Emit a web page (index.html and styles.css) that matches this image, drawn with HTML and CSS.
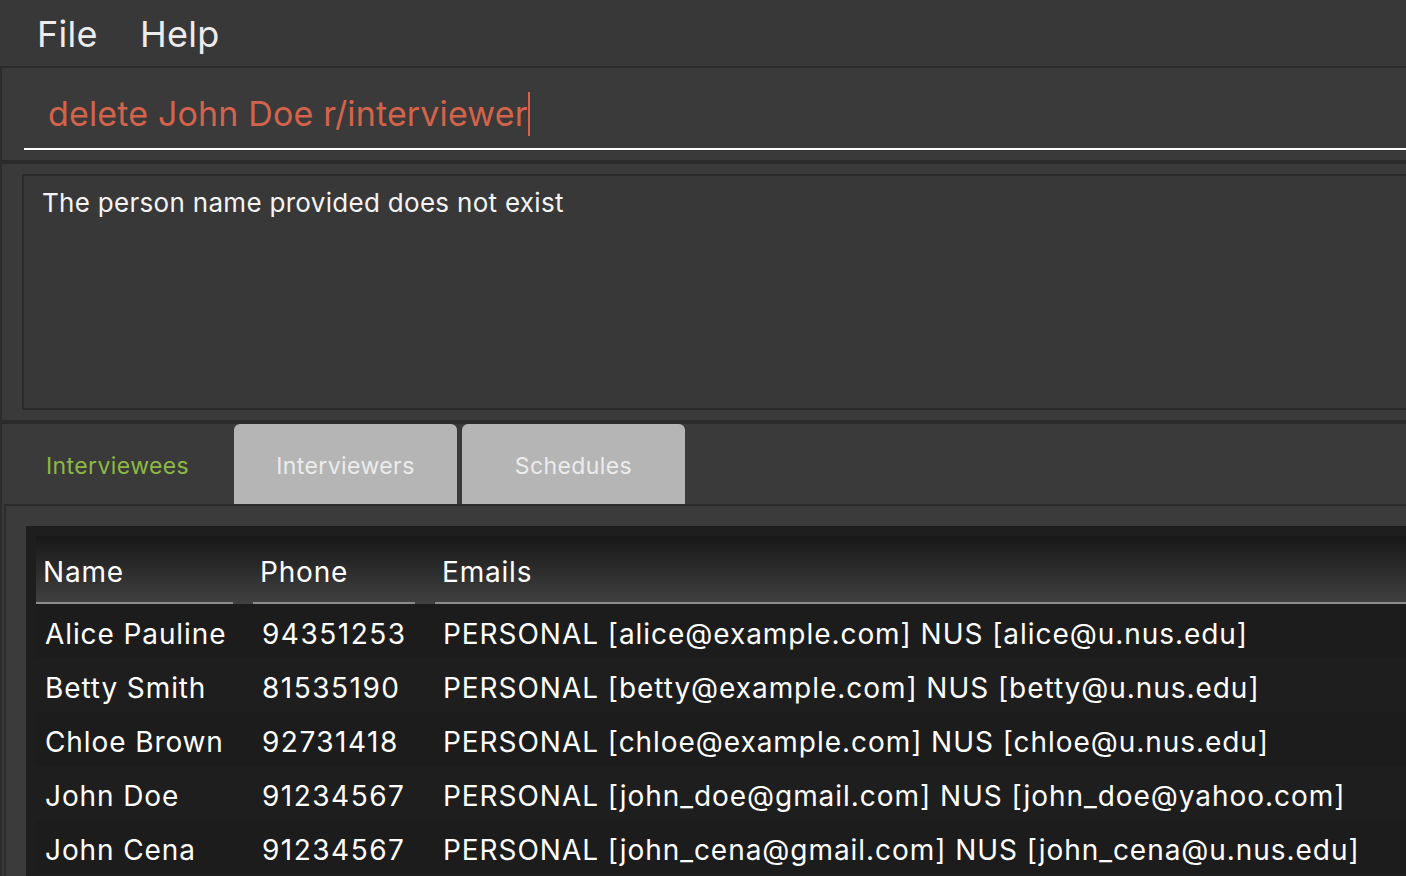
FILE: index.html
```html
<!DOCTYPE html>
<html>
<head>
<meta charset="utf-8">
<link rel="stylesheet" href="styles.css">
</head>
<body>
<div class="app">
  <div class="menubar">
    <span class="menu">File</span>
    <span class="menu">Help</span>
  </div>
  <div class="pane command-pane">
    <div class="command-field">
      <span class="command-text">delete John Doe r/interviewer</span><span class="caret"></span>
    </div>
  </div>
  <div class="pane result-pane">
    <div class="result-box">The person name provided does not exist</div>
  </div>
  <div class="pane tab-pane">
    <div class="tab-header">
      <div class="tab tab-selected">Interviewees</div>
      <div class="tab tab-plain">Interviewers</div>
      <div class="tab tab-plain">Schedules</div>
    </div>
    <div class="tab-content">
      <div class="table">
        <div class="thead">
          <div class="th"><span>Name</span></div>
          <div class="th"><span>Phone</span></div>
          <div class="th th-last"><span>Emails</span></div>
        </div>
        <div class="tr"><div class="td">Alice Pauline</div><div class="td phone">94351253</div><div class="td email">PERSONAL [alice@example.com] NUS [alice@u.nus.edu]</div></div>
        <div class="tr alt"><div class="td">Betty Smith</div><div class="td phone">81535190</div><div class="td email">PERSONAL [betty@example.com] NUS [betty@u.nus.edu]</div></div>
        <div class="tr"><div class="td">Chloe Brown</div><div class="td phone">92731418</div><div class="td email">PERSONAL [chloe@example.com] NUS [chloe@u.nus.edu]</div></div>
        <div class="tr alt"><div class="td">John Doe</div><div class="td phone">91234567</div><div class="td email">PERSONAL [john_doe@gmail.com] NUS [john_doe@yahoo.com]</div></div>
        <div class="tr"><div class="td">John Cena</div><div class="td phone">91234567</div><div class="td email">PERSONAL [john_cena@gmail.com] NUS [john_cena@u.nus.edu]</div></div>
      </div>
    </div>
  </div>
</div>
</body>
</html>
```
FILE: styles.css
```css
* { box-sizing: border-box; }
html, body {
  margin: 0;
  padding: 0;
  width: 1406px;
  height: 876px;
  overflow: hidden;
  background: #383838;
  font-family: "Inter", "Noto Sans", sans-serif;
}
.app {
  display: flex;
  flex-direction: column;
  height: 876px;
  overflow: hidden;
}
.menubar {
  height: 68px;
  display: flex;
  align-items: flex-start;
  gap: 42px;
  padding-left: 37px;
  padding-top: 11px;
  background: #383838;
  border-bottom: 2px solid #2b2b2b;
  flex: none;
}
.menu {
  font-size: 36px;
  line-height: 46px;
  color: #ececec;
  letter-spacing: 0.3px;
}
.pane {
  border-left: 2px solid #2c2c2c;
  background: #3a3a3a;
  flex: none;
}
.command-pane {
  height: 96px;
  padding: 0 0 0 22px;
  border-bottom: 4px solid #2b2b2b;
}
.command-field {
  height: 82px;
  border-bottom: 2px solid #ffffff;
  padding-left: 24px;
  padding-top: 24px;
  display: flex;
  align-items: flex-start;
}
.command-text {
  font-size: 34px;
  line-height: 44px;
  color: #d3634b;
  letter-spacing: 0.15px;
}
.caret {
  width: 2px;
  height: 44px;
  background: #d3634b;
  margin-left: 0;
}
.result-pane {
  height: 260px;
  padding: 10px 0 10px 20px;
  border-bottom: 4px solid #2b2b2b;
}
.result-box {
  height: 236px;
  margin-right: -10px;
  border: 2px solid #2b2b2b;
  background: #383838;
  padding: 9px 0 0 18px;
  font-size: 26px;
  line-height: 36px;
  color: #f4f4f4;
  letter-spacing: 0.3px;
}
.tab-pane {
  flex: 1;
  min-height: 0;
  display: flex;
  flex-direction: column;
}
.tab-header {
  height: 80px;
  display: flex;
  align-items: stretch;
  flex: none;
}
.tab {
  font-size: 23px;
  letter-spacing: 0.4px;
  display: flex;
  align-items: center;
  justify-content: center;
  padding-top: 4px;
}
.tab-selected {
  width: 232px;
  color: #8db844;
  justify-content: flex-start;
  padding-left: 44px;
}
.tab-plain {
  width: 223px;
  background: #b5b5b5;
  color: #ececec;
  border-radius: 6px 6px 0 0;
  margin-right: 5px;
}
.tab-content {
  flex: 1;
  min-height: 0;
  overflow: hidden;
  border-top: 2px solid #2c2c2c;
  border-left: 2px solid #2c2c2c;
  margin-left: 2px;
  background: #3b3b3b;
  padding: 20px 0 0 20px;
}
.table {
  background: #1e1e1e;
  padding: 10px 0 0 10px;
  height: 100%;
}
.thead {
  display: grid;
  grid-template-columns: 217px 182px 1fr;
  height: 68px;
  background: linear-gradient(to bottom, #181818 0%, #2a2a2a 45%, #414141 100%);
}
.th {
  display: flex;
  flex-direction: column;
  justify-content: flex-end;
  padding-right: 20px;
}
.th span {
  display: block;
  font-size: 28px;
  line-height: 34px;
  letter-spacing: 0.8px;
  color: #ffffff;
  padding-left: 7px;
  padding-bottom: 13px;
  border-bottom: 2px solid #8c8c8c;
}
.th-last { padding-right: 0; }
.tr {
  display: grid;
  grid-template-columns: 217px 182px 1fr;
  height: 54px;
  align-items: center;
  background: #1c1c1c;
}
.tr.alt { background: #1e1e1e; }
.td {
  font-size: 28px;
  line-height: 34px;
  letter-spacing: 0.9px;
  color: #ffffff;
  padding-left: 9px;
  padding-top: 5px;
  white-space: nowrap;
}
.td.phone { letter-spacing: 1.5px; }
.td.email { padding-left: 8px; letter-spacing: 0.95px; }
```
